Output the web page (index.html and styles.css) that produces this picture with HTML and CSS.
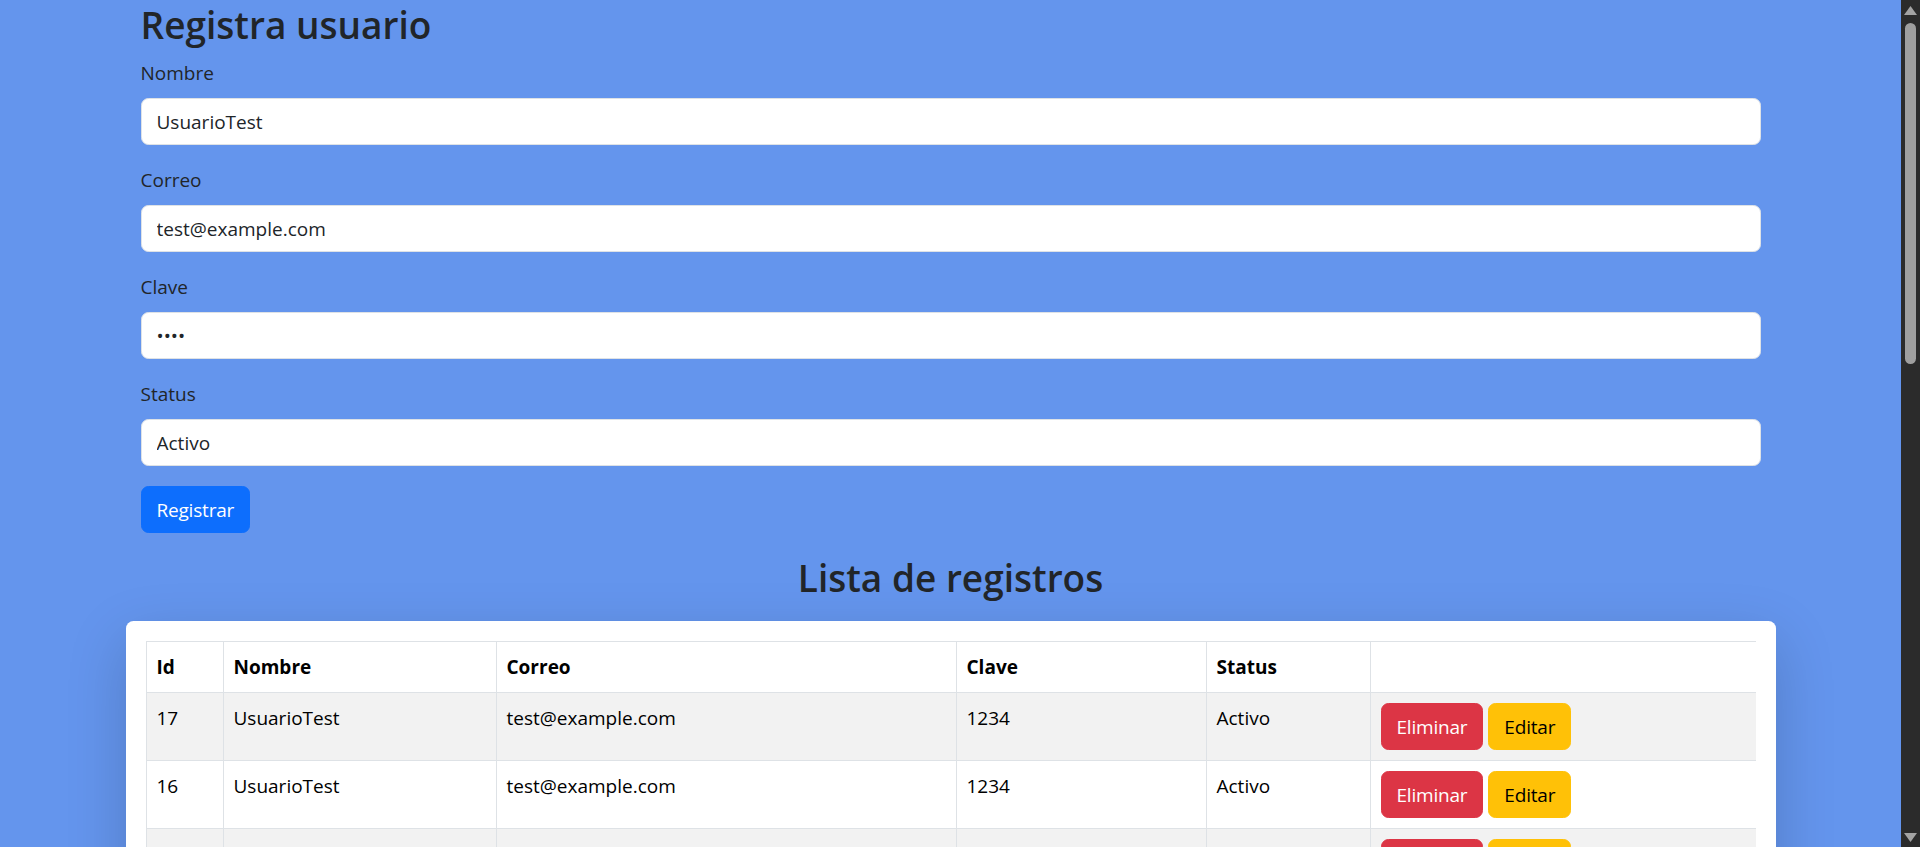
FILE: index.html
```html
<!DOCTYPE html>
<html lang="es">
<head>
<meta charset="utf-8">
<title>Registro de usuarios</title>
<link rel="stylesheet" href="styles.css">
</head>
<body>
<div class="page">
  <main class="container">
    <h2 class="page-title">Registra usuario</h2>
    <form class="form">
      <div class="field">
        <label class="label" for="nombre">Nombre</label>
        <input class="input" id="nombre" type="text" value="UsuarioTest">
      </div>
      <div class="field">
        <label class="label" for="correo">Correo</label>
        <input class="input" id="correo" type="email" value="test@example.com">
      </div>
      <div class="field">
        <label class="label" for="clave">Clave</label>
        <input class="input" id="clave" type="password" value="1234">
      </div>
      <div class="field">
        <label class="label" for="status">Status</label>
        <input class="input" id="status" type="text" value="Activo">
      </div>
      <button type="button" class="btn btn-primary">Registrar</button>
    </form>
    <h2 class="list-title">Lista de registros</h2>
  </main>
  <section class="card">
    <div class="table-wrap">
      <table class="table">
        <colgroup>
          <col class="c-id"><col class="c-nombre"><col class="c-correo"><col class="c-clave"><col class="c-status"><col class="c-acc">
        </colgroup>
        <thead>
          <tr><th>Id</th><th>Nombre</th><th>Correo</th><th>Clave</th><th>Status</th><th></th></tr>
        </thead>
        <tbody>
          <tr><td>17</td><td>UsuarioTest</td><td>test@example.com</td><td>1234</td><td>Activo</td><td><button type="button" class="btn btn-danger">Eliminar</button> <button type="button" class="btn btn-warning">Editar</button></td></tr>
          <tr><td>16</td><td>UsuarioTest</td><td>test@example.com</td><td>1234</td><td>Activo</td><td><button type="button" class="btn btn-danger">Eliminar</button> <button type="button" class="btn btn-warning">Editar</button></td></tr>
          <tr><td>15</td><td>UsuarioTest</td><td>test@example.com</td><td>1234</td><td>Activo</td><td><button type="button" class="btn btn-danger">Eliminar</button> <button type="button" class="btn btn-warning">Editar</button></td></tr>
          <tr><td>14</td><td>UsuarioTest</td><td>test@example.com</td><td>1234</td><td>Activo</td><td><button type="button" class="btn btn-danger">Eliminar</button> <button type="button" class="btn btn-warning">Editar</button></td></tr>
          <tr><td>13</td><td>UsuarioTest</td><td>test@example.com</td><td>1234</td><td>Activo</td><td><button type="button" class="btn btn-danger">Eliminar</button> <button type="button" class="btn btn-warning">Editar</button></td></tr>
        </tbody>
      </table>
    </div>
  </section>
</div>
<div class="scrollbar" aria-hidden="true">
  <svg class="sb-up" width="13" height="9" viewBox="0 0 13 9"><polygon points="6.5,0 13,9 0,9" fill="#a3a3a3"/></svg>
  <div class="sb-thumb"></div>
  <div class="sb-space"></div>
  <svg class="sb-down" width="13" height="9" viewBox="0 0 13 9"><polygon points="0,0 13,0 6.5,9" fill="#a3a3a3"/></svg>
</div>
</body>
</html>
```
FILE: styles.css
```css
html, body {
  height: 100%;
}

body {
  margin: 0;
  display: flex;
  overflow: hidden;
  background: #6495ed;
  font-family: "Open Sans", "Noto Sans", sans-serif;
  font-size: 19px;
  line-height: 30px;
  color: #212529;
}

.page {
  flex: 1;
  min-width: 0;
  overflow: hidden;
}

.container {
  width: 1650px;
  box-sizing: border-box;
  padding: 0 15px;
  margin: 0 auto;
}

.page-title,
.list-title {
  font-size: 37px;
  line-height: 50px;
  font-weight: 600;
}

.page-title {
  margin: 0 0 8px;
}

.list-title {
  margin: 0 0 18px;
  text-align: center;
}

.form {
  margin-bottom: 20px;
}

.field {
  margin-bottom: 20px;
}

.label {
  display: block;
  margin-bottom: 10px;
}

.input {
  display: block;
  width: 100%;
  height: 47px;
  box-sizing: border-box;
  padding: 7.5px 15px;
  border: 1px solid #dee2e6;
  border-radius: 7.5px;
  background: #fff;
  color: #212529;
  font: inherit;
  outline: none;
}

.btn {
  display: inline-block;
  height: 47px;
  box-sizing: border-box;
  padding: 7.5px 15px;
  border: 1px solid transparent;
  border-radius: 7.5px;
  font: inherit;
  line-height: 30px;
  letter-spacing: -0.2px;
  vertical-align: top;
  cursor: pointer;
}

.btn-primary {
  background: #0d6efd;
  border-color: #0d6efd;
  color: #fff;
}

.btn-danger {
  background: #dc3545;
  border-color: #dc3545;
  color: #fff;
}

.btn-warning {
  background: #ffc107;
  border-color: #ffc107;
  color: #000;
}

.card {
  width: 1650px;
  box-sizing: border-box;
  margin: 0 auto;
  padding: 20px;
  background: #fff;
  border-radius: 7.5px;
  box-shadow: 0 20px 60px rgba(0, 0, 0, 0.175);
}

.table-wrap {
  overflow-x: auto;
}

.table {
  width: 1800px;
  table-layout: fixed;
  border-collapse: collapse;
  color: #000;
  margin-bottom: 20px;
}

.c-id { width: 77px; }
.c-nombre { width: 273px; }
.c-correo { width: 460px; }
.c-clave { width: 250px; }
.c-status { width: 164px; }
.c-acc { width: 576px; }

.table th,
.table td {
  border: 1px solid #dee2e6;
  padding: 10px;
  text-align: left;
  vertical-align: top;
  white-space: nowrap;
}

.table th {
  font-weight: 700;
}

.table tbody tr:nth-child(odd) td {
  background: #f2f2f2;
}

.scrollbar {
  flex: none;
  width: 19px;
  background: #2b2b2b;
  display: flex;
  flex-direction: column;
  align-items: center;
}

.sb-up {
  display: block;
  margin-top: 6px;
}

.sb-thumb {
  margin-top: 8px;
  width: 11px;
  height: 341px;
  background: #9f9f9f;
  border-radius: 6px;
}

.sb-space {
  flex: 1;
}

.sb-down {
  display: block;
  margin-bottom: 5px;
}
```
